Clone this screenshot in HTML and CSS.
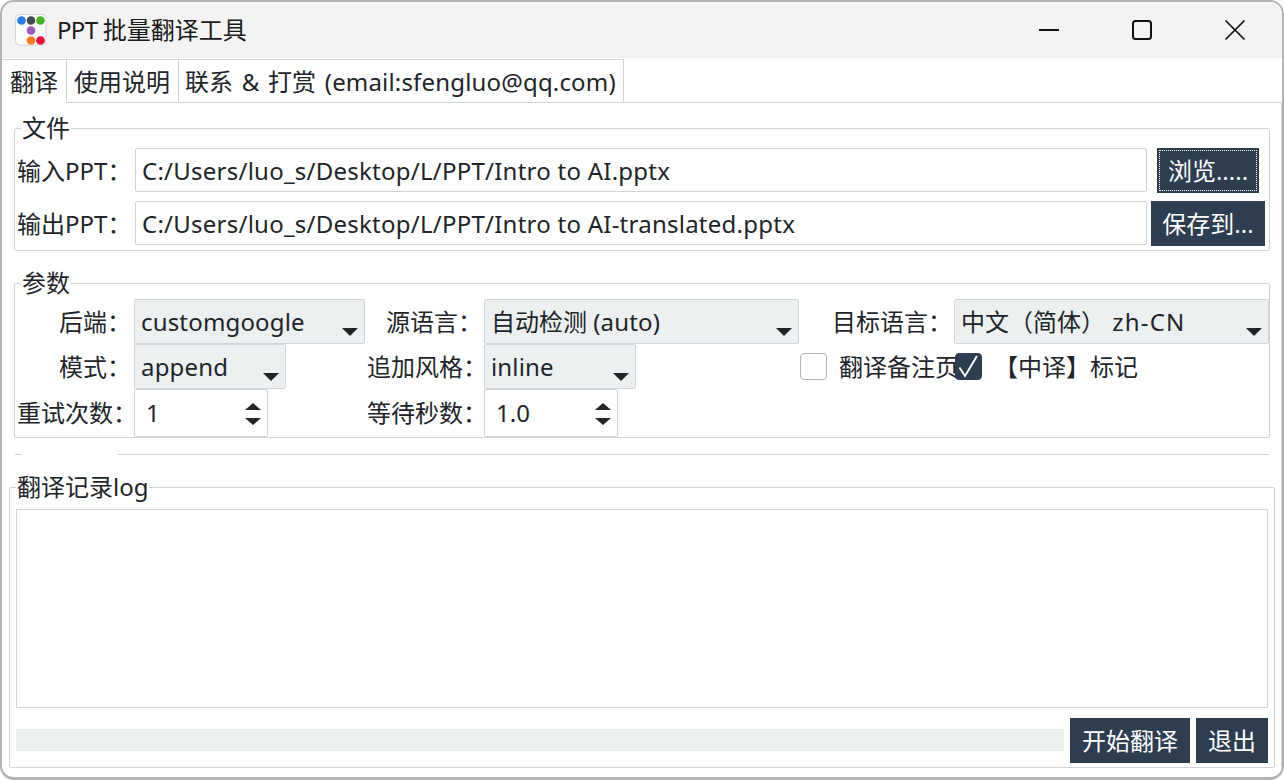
FILE: index.html
```html
<!DOCTYPE html>
<html lang="zh-CN">
<head>
<meta charset="utf-8">
<title>PPT 批量翻译工具</title>
<link rel="stylesheet" href="styles.css">
</head>
<body>
<div class="window">
  <header class="titlebar">
    <svg class="app-icon" width="32" height="32" viewBox="0 0 32 32">
      <rect x="0.500" y="0.500" width="30.500" height="30.500" rx="4" fill="#fff" stroke="#d5d5d5"/>
      <circle cx="6.500" cy="6.500" r="4.300" fill="#2b7de9"/>
      <circle cx="16" cy="6.500" r="4.300" fill="#444a4f"/>
      <circle cx="25.500" cy="6.500" r="4.300" fill="#43b51f"/>
      <circle cx="16" cy="16.500" r="4.300" fill="#9b59c0"/>
      <circle cx="16" cy="26.500" r="4.300" fill="#f97b1c"/>
      <circle cx="25.500" cy="26.500" r="4.300" fill="#f5073f"/>
    </svg>
    <span class="title"><span class="title-lat">PPT </span>批量翻译工具</span>
    <div class="win-controls">
      <svg class="win-btn" width="22" height="22" viewBox="0 0 22 22"><path d="M1 11h20" stroke="#111" stroke-width="2"/></svg>
      <svg class="win-btn" width="22" height="22" viewBox="0 0 22 22"><rect x="2" y="2" width="18" height="18" rx="2.500" fill="none" stroke="#111" stroke-width="2"/></svg>
      <svg class="win-btn" width="22" height="22" viewBox="0 0 22 22"><path d="M1.500 1.500l19 19M20.500 1.500l-19 19" stroke="#111" stroke-width="1.700" fill="none"/></svg>
    </div>
  </header>

  <nav class="tabs">
    <div class="tab tab-active">翻译</div>
    <div class="tab tab-help">使用说明</div>
    <div class="tab tab-contact">联系 &amp; 打赏 <span class="lat-sm">(email:sfengluo@qq.com)</span></div>
  </nav>

  <main class="panel">
    <section class="group group-file">
      <span class="legend">文件</span>
      <div class="file-grid">
        <span class="label label-file">输入PPT：</span>
        <div class="entry">C:/Users/luo_s/Desktop/L/PPT/Intro to AI.pptx</div>
        <button class="btn btn-browse"><span class="focus-ring">浏览.....</span></button>
        <span class="label label-file">输出PPT：</span>
        <div class="entry">C:/Users/luo_s/Desktop/L/PPT/Intro to AI-translated.pptx</div>
        <button class="btn btn-save">保存到...</button>
      </div>
    </section>

    <section class="group group-params">
      <span class="legend">参数</span>
      <div class="param-grid">
        <span class="label lbl-r3">后端：</span>
        <div class="combo combo-full"><span class="lat-sm">customgoogle</span><i class="arrow"></i></div>
        <span class="label lbl-r2">源语言：</span>
        <div class="combo combo-full">自动检测 <span class="lat-sm">(auto)</span><i class="arrow"></i></div>
        <span class="label lbl-r2">目标语言：</span>
        <div class="combo combo-full">中文（简体） <span class="lat-wide">zh-CN</span><i class="arrow"></i></div>

        <span class="label lbl-r3">模式：</span>
        <div class="combo combo-short"><span class="lat-sm">append</span><i class="arrow"></i></div>
        <span class="label lbl-l2">追加风格：</span>
        <div class="combo combo-short"><span class="lat-sm">inline</span><i class="arrow"></i></div>
        <label class="check check-notes"><i class="box"></i><span class="check-text">翻译备注页</span></label>
        <label class="check"><i class="box box-on"><svg width="27" height="27" viewBox="0 0 27 27"><path d="M4.500 14.500l5.500 8.500 12-20" fill="none" stroke="#fff" stroke-width="1.900"/></svg></i><span class="check-text">【中译】标记</span></label>

        <span class="label lbl-l2">重试次数：</span>
        <div class="spin"><span>1</span><span class="spin-arrows"><i class="up"></i><i class="down"></i></span></div>
        <span class="label lbl-l2">等待秒数：</span>
        <div class="spin"><span>1.0</span><span class="spin-arrows"><i class="up"></i><i class="down"></i></span></div>
      </div>
    </section>

    <div class="separator"><i></i><b></b><i></i></div>

    <section class="group group-log">
      <span class="legend">翻译记录log</span>
      <div class="log-box"></div>
      <div class="bottom-row">
        <div class="progress"></div>
        <button class="btn btn-start">开始翻译</button>
        <button class="btn btn-exit">退出</button>
      </div>
    </section>
  </main>
</div>
</body>
</html>
```

FILE: styles.css
```css
* { box-sizing: border-box; }
html, body { margin: 0; padding: 0; background: #fff; }
body {
  width: 1284px;
  height: 780px;
  overflow: hidden;
  font-family: "Noto Sans", "Noto Sans CJK SC", sans-serif;
  font-size: 24px;
  line-height: 32px;
  color: #212529;
}
.lat-sm { letter-spacing: 0.17px; }
.lat-wide { letter-spacing: 1.2px; margin-left: 1px; }
.window {
  width: 1284px;
  height: 780px;
  border: solid #b4b4b4;
  border-width: 2px 2px 3px 2px;
  border-radius: 14px;
  background: #fff;
  overflow: hidden;
  display: flex;
  flex-direction: column;
}
.titlebar {
  height: 56px;
  flex: none;
  background: #f3f3f3;
  display: flex;
  align-items: center;
  padding-left: 13px;
}
.app-icon { flex: none; }
.title { margin-left: 10px; color: #1a1a1a; }
.title-lat { letter-spacing: -0.7px; }
.win-controls { margin-left: auto; display: flex; gap: 71px; padding-right: 36px; }
.win-btn { display: block; }

.tabs {
  height: 45px;
  flex: none;
  display: flex;
  padding-top: 1px;
  border-bottom: 1px solid #ced4da;
}
.tab {
  height: 43px;
  padding: 6px 7px 0;
  border: solid #ced4da;
  border-width: 1px 1px 0 0;
  white-space: nowrap;
  background: #fff;
}
.tab-active { height: 44px; position: relative; z-index: 1; width: 65px; padding-left: 8px; }
.tab-help { padding-right: 8px; }
.tab-contact { padding-left: 6px; word-spacing: 2.500px; }

.panel {
  flex: 1;
  min-height: 0;
  border-right: 1px solid #ced4da;
  padding-top: 25px;
  display: flex;
  flex-direction: column;
}
.group {
  position: relative;
  border: 1px solid #ced4da;
  border-radius: 2px;
}
.legend {
  position: absolute;
  left: 6px;
  top: -17px;
  padding: 0 1px 0 1px;
  background: #fff;
  white-space: nowrap;
}
.group-file { margin: 0 11px 0 12px; height: 123px; padding: 19px 0 0 0; }
.file-grid {
  display: grid;
  grid-template-columns: 120px 1012px 122px;
  grid-auto-rows: 45px;
  row-gap: 8px;
  align-items: center;
}
.label { white-space: nowrap; }
.label-file { margin-left: 2px; }
.entry {
  height: 44px;
  align-self: start;
  border: 1px solid #ced4da;
  border-radius: 2px;
  padding: 6px 6px 0;
  white-space: nowrap;
  letter-spacing: 0.245px;
}
.btn {
  font: inherit;
  color: #fff;
  background: #2c3e50;
  border: 0;
  padding: 0;
  height: 45px;
  display: block;
}
.btn-browse { width: 102px; justify-self: center; padding: 2px; }
.focus-ring {
  display: flex;
  align-items: center;
  justify-content: center;
  width: 100%;
  height: 100%;
  border: 1px dotted #fff;
}
.btn-save { width: 114px; justify-self: center; }

.group-params { margin: 32px 11px 0 12px; height: 155px; padding-top: 15px; }
.param-grid {
  display: grid;
  grid-template-columns: 119px 231px 119px 315px 155px 315px;
  grid-template-rows: 45px 45px 48px;
  align-items: center;
}
.lbl-r3 { justify-self: end; margin-right: 3px; }
.lbl-r2 { justify-self: end; margin-right: 2px; }
.lbl-l2 { justify-self: start; margin-left: 2px; }
.combo {
  position: relative;
  height: 45px;
  background: #ecf0f1;
  border: 1px solid #ced4da;
  border-radius: 2px;
  padding: 6px 6px 0;
  white-space: nowrap;
}
.combo-full { width: 100%; }
.combo-short { width: 152px; }
.arrow {
  position: absolute;
  right: 6px;
  bottom: 7px;
  width: 0;
  height: 0;
  border: solid transparent;
  border-width: 8px 8px 0;
  border-top-color: #212529;
}
.spin {
  width: 134px;
  height: 48px;
  border: 1px solid #ced4da;
  border-radius: 2px;
  padding: 7px 0 0 11px;
  display: flex;
  justify-content: space-between;
}
.spin-arrows {
  display: flex;
  flex-direction: column;
  gap: 8px;
  padding: 6px 6px 0 0;
}
.spin-arrows i { width: 0; height: 0; border: solid transparent; border-width: 0 8px; }
.spin-arrows .up { border-bottom: 7px solid #212529; }
.spin-arrows .down { border-top: 7px solid #212529; }

.check { display: flex; align-items: center; white-space: nowrap; padding-left: 1px; }
.check-notes { grid-column: 5; }
.box {
  flex: none;
  display: block;
  width: 27px;
  height: 27px;
  border: 1px solid #b4b4b4;
  border-radius: 4px;
  background: #fff;
  position: relative;
}
.box-on { background: #2c3e50; border-color: #2c3e50; }
.box-on svg { position: absolute; left: -1px; top: -1px; }
.check-text { margin-left: 12px; }

.separator { display: flex; margin: 16px 12px 0 13px; height: 1px; flex: none; }
.separator i { height: 1px; background: #ced4da; }
.separator i:first-child { width: 7px; }
.separator b { width: 96px; }
.separator i:last-child { flex: 1; }

.group-log {
  margin: 32px 6px 0 7px;
  height: 281px;
  padding: 21px 6px 0 6px;
}
.log-box { height: 199px; border: 1px solid #ced4da; }
.bottom-row { display: flex; align-items: center; gap: 6px; margin-top: 10px; }
.progress { flex: 1; height: 22px; margin-bottom: 1px; background: #ecf0f1; }
.btn-start { width: 120px; }
.btn-exit { width: 72px; }
```
